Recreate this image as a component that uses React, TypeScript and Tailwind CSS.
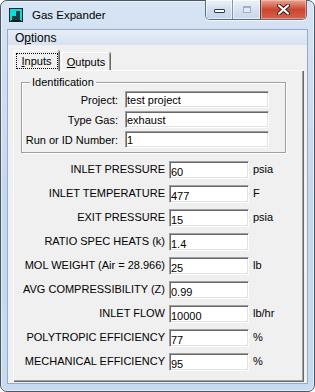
const ui = { fontFamily: '"Liberation Sans", Arial, sans-serif' };

const groupRows = [
  { label: "Project:", value: "test project" },
  { label: "Type Gas:", value: "exhaust" },
  { label: "Run or ID Number:", value: "1" },
];

const inputRows = [
  { label: "INLET PRESSURE", value: "60", unit: "psia" },
  { label: "INLET TEMPERATURE", value: "477", unit: "F" },
  { label: "EXIT PRESSURE", value: "15", unit: "psia" },
  { label: "RATIO SPEC HEATS (k)", value: "1.4", unit: "" },
  { label: "MOL WEIGHT (Air = 28.966)", value: "25", unit: "lb" },
  { label: "AVG COMPRESSIBILITY (Z)", value: "0.99", unit: "" },
  { label: "INLET FLOW", value: "10000", unit: "lb/hr" },
  { label: "POLYTROPIC EFFICIENCY", value: "77", unit: "%" },
  { label: "MECHANICAL EFFICIENCY", value: "95", unit: "%" },
];

const boxClass =
  "border border-t-[#a0a0a0] border-l-[#a0a0a0] border-b-white border-r-white bg-white shadow-[inset_1px_1px_0_#696969,inset_-1px_-1px_0_#e3e3e3] text-[11px] leading-[14px] text-black pl-[1px]";

function AppIcon() {
  return (
    <svg width="14" height="14" viewBox="0 0 14 14">
      <rect x="0.5" y="0.5" width="13" height="13" fill="#00e0e0" stroke="#102020" />
      <path d="M3 12 V8 H7 V3 H11 V12 Z" fill="#1e3c3c" />
      <path d="M2 12.5 H12" stroke="#0a2020" />
    </svg>
  );
}

function TitleButtons() {
  return (
    <div className="flex h-[20px] -mt-px self-start overflow-hidden rounded-b-[5px] border border-t-0 border-[#5a6b82] shadow-[0_1px_0_rgba(255,255,255,0.7)]">
      <div className="flex w-[27px] items-center justify-center border-r border-[#8394ab] bg-gradient-to-b from-[#edf2f9] via-[#d3deec] to-[#c3d3e7] shadow-[inset_0_0_0_1px_rgba(255,255,255,0.6)]">
        <div className="mt-[3px] h-[4px] w-[11px] rounded-[1px] border border-[#2a3a50] bg-white" />
      </div>
      <div className="flex w-[28px] items-center justify-center border-r border-[#7b2f22] bg-gradient-to-b from-[#edf2f9] via-[#d8e2ef] to-[#cad8ea] shadow-[inset_0_0_0_1px_rgba(255,255,255,0.6)]">
        <div className="-mt-[1px] h-[7px] w-[8px] border border-t-2 border-[#9db0c8] bg-[#e2eaf4]" />
      </div>
      <div className="flex w-[45px] items-center justify-center bg-gradient-to-b from-[#e9a493] via-[#c8452f] to-[#d9624a] shadow-[inset_0_0_0_1px_rgba(255,220,210,0.45)]">
        <svg width="13" height="11" viewBox="0 0 13 11">
          <path d="M2 1.5 L11 9.5 M11 1.5 L2 9.5" stroke="#3b1a14" strokeWidth="4" strokeLinecap="round" />
          <path d="M2 1.5 L11 9.5 M11 1.5 L2 9.5" stroke="#ffffff" strokeWidth="2.2" strokeLinecap="round" />
        </svg>
      </div>
    </div>
  );
}

export default function App() {
  return (
    <div
      className="flex h-[392px] w-[315px] flex-col rounded-[7px] border border-[#4b5666] bg-gradient-to-b from-[#d6e4f4] via-[#c4d8ee] to-[#c6daf0] shadow-[inset_0_0_0_1px_rgba(255,255,255,0.55)]"
      style={ui}
    >
      <div className="flex h-[28px] shrink-0 items-start pl-[8px] pr-[7px]">
        <div className="mt-[7px]">
          <AppIcon />
        </div>
        <div className="ml-[9px] mt-[7px] text-[11.5px] leading-[14px] text-black">Gas Expander</div>
        <div className="flex-1" />
        <TitleButtons />
      </div>

      <div className="mx-[6px] mb-[7px] flex flex-1 flex-col border border-[#97abc4] bg-[#f0f0f0]">
        <div className="flex h-[15px] shrink-0 items-center bg-gradient-to-b from-[#e6edf7] to-[#d6e2f0] pl-[7px] text-[12px] leading-[14px] text-black">
          <span>
            O<span className="underline underline-offset-1">p</span>tions
          </span>
        </div>

        <div className="flex flex-1 flex-col pl-[5px] pt-[5px]">
          <div className="flex items-end">
            <div className="relative z-10 -mb-px flex h-[21px] w-[46px] justify-center rounded-t-[2px] border-l border-t border-white bg-[#f0f0f0] pt-[2px] shadow-[inset_-1px_0_0_#a0a0a0] [box-shadow:inset_-1px_0_0_#a0a0a0,1px_0_0_#696969]">
              <div className="flex h-[16px] w-[42px] items-center justify-center border border-dotted border-black text-[11px] leading-[14px] text-black">
                <span>
                  <span className="underline underline-offset-1">I</span>nputs
                </span>
              </div>
            </div>
            <div className="ml-[2px] flex h-[18px] w-[49px] items-center justify-center rounded-t-[2px] border-l border-t border-white text-[11px] leading-[14px] text-black [box-shadow:inset_-1px_0_0_#a0a0a0,1px_0_0_#696969]">
              <span>
                <span className="underline underline-offset-1">O</span>utputs
              </span>
            </div>
          </div>

          <div className="flex w-[290px] flex-1 flex-col border-l border-t border-white [box-shadow:inset_-1px_-1px_0_#a0a0a0,1px_1px_0_#696969] mb-[2px]">
            <div className="ml-[7px] mt-[11px] w-[265px] border border-[#a0a0a0] pb-[4px] shadow-[1px_1px_0_#ffffff,inset_1px_1px_0_#ffffff]">
              <span className="-mt-[7px] ml-[8px] block h-[13px] w-fit bg-[#f0f0f0] px-[2px] text-[11px] leading-[13px] text-black">
                Identification
              </span>
              <div className="mt-[2px] flex flex-col gap-[3px]">
                {groupRows.map((row) => (
                  <div key={row.label} className="flex h-[17px] items-start">
                    <div className="w-[96px] pt-[2px] text-right text-[11px] leading-[14px] text-black">{row.label}</div>
                    <div className={`ml-[7px] h-[17px] w-[144px] pt-[1px] ${boxClass}`}>{row.value}</div>
                  </div>
                ))}
              </div>
            </div>

            <div className="mt-[8px] flex flex-col gap-[6px]">
              {inputRows.map((row) => (
                <div key={row.label} className="flex h-[18px] items-start">
                  <div className="w-[151px] whitespace-nowrap pt-[1px] text-right text-[11px] leading-[14px] text-black">
                    {row.label}
                  </div>
                  <div className={`ml-[4px] h-[18px] w-[80px] pt-[3px] ${boxClass}`}>{row.value}</div>
                  <div className="ml-[4px] pt-[1px] text-[11px] leading-[14px] text-black">{row.unit}</div>
                </div>
              ))}
            </div>
          </div>
        </div>
      </div>
    </div>
  );
}
